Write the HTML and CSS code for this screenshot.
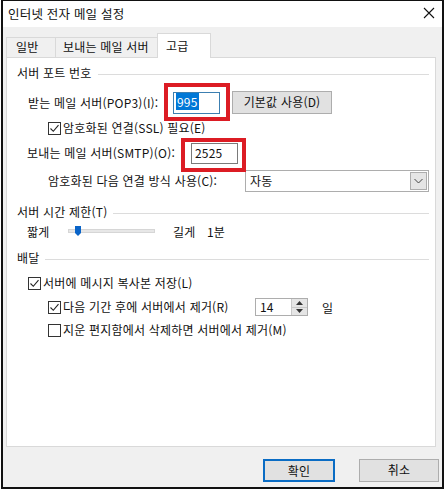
FILE: index.html
```html
<!DOCTYPE html>
<html lang="ko">
<head>
<meta charset="utf-8">
<title>인터넷 전자 메일 설정</title>
<link rel="stylesheet" href="styles.css">
</head>
<body>
<div class="window">
  <div class="titlebar">
    <span class="title">인터넷 전자 메일 설정</span>
    <svg class="close" width="12" height="12" viewBox="0 0 12 12"><path d="M1 1 L11 11 M11 1 L1 11" stroke="#111" stroke-width="1.1" fill="none"/></svg>
  </div>
  <div class="content">
    <div class="tabs">
      <div class="tab tab-general">일반</div>
      <div class="tab tab-outgoing">보내는 메일 서버</div>
      <div class="tab tab-adv">고급</div>
    </div>
    <div class="panel">
      <div class="group-head h1"><span>서버 포트 번호</span><i class="rule"></i></div>

      <div class="row pop3">
        <span class="lbl lbl-pop3">받는 메일 서버(POP3)(I):</span>
        <div class="field f-pop3"><span class="sel">995</span></div>
        <div class="btn btn-default">기본값 사용(D)</div>
      </div>

      <div class="row ssl">
        <span class="chk on"><svg width="13" height="13" viewBox="0 0 13 13"><path d="M2.5 6.5 L5.3 9.3 L10.5 3.2" stroke="#222" stroke-width="1.1" fill="none"/></svg></span>
        <span class="ctext">암호화된 연결(SSL) 필요(E)</span>
      </div>

      <div class="row smtp">
        <span class="lbl lbl-smtp">보내는 메일 서버(SMTP)(O):</span>
        <div class="field f-smtp">2525</div>
      </div>

      <div class="row enc">
        <span class="lbl lbl-enc">암호화된 다음 연결 방식 사용(C):</span>
        <div class="select">
          <span class="sel-text">자동</span>
          <span class="drop"><svg width="9" height="6" viewBox="0 0 9 6"><path d="M0.5 1 L4.5 5 L8.5 1" stroke="#444" stroke-width="1" fill="none"/></svg></span>
        </div>
      </div>

      <div class="group-head h2"><span>서버 시간 제한(T)</span><i class="rule"></i></div>

      <div class="row slider-row">
        <span class="s-short">짧게</span>
        <div class="track"><span class="thumb"><svg width="6" height="10" viewBox="0 0 6 10"><path d="M0 0 H6 V7 L3 10 L0 7 Z" fill="#0a64c8"/></svg></span></div>
        <span class="s-long">길게</span>
        <span class="s-val">1분</span>
      </div>

      <div class="group-head h3"><span>배달</span><i class="rule"></i></div>

      <div class="row c1">
        <span class="chk on"><svg width="13" height="13" viewBox="0 0 13 13"><path d="M2.5 6.5 L5.3 9.3 L10.5 3.2" stroke="#222" stroke-width="1.1" fill="none"/></svg></span>
        <span class="ctext">서버에 메시지 복사본 저장(L)</span>
      </div>

      <div class="row c2">
        <span class="chk on"><svg width="13" height="13" viewBox="0 0 13 13"><path d="M2.5 6.5 L5.3 9.3 L10.5 3.2" stroke="#222" stroke-width="1.1" fill="none"/></svg></span>
        <span class="ctext ctext-remove">다음 기간 후에 서버에서 제거(R)</span>
        <div class="spin">
          <span class="spin-val">14</span>
          <span class="spin-btns">
            <span class="sb"><svg width="7" height="4" viewBox="0 0 7 4"><path d="M0 4 L3.5 0 L7 4 Z" fill="#333"/></svg></span>
            <span class="sb"><svg width="7" height="4" viewBox="0 0 7 4"><path d="M0 0 L3.5 4 L7 0 Z" fill="#333"/></svg></span>
          </span>
        </div>
        <span class="unit">일</span>
      </div>

      <div class="row c3">
        <span class="chk"></span>
        <span class="ctext">지운 편지함에서 삭제하면 서버에서 제거(M)</span>
      </div>
    </div>
    <div class="footer">
      <div class="btn btn-ok">확인</div>
      <div class="btn btn-cancel">취소</div>
    </div>
  </div>
</div>
</body>
</html>
```
FILE: styles.css
```css
* { box-sizing: border-box; }
html, body { margin: 0; padding: 0; background: #fff; }
body {
  font-family: "Noto Sans CJK KR", "Noto Sans", sans-serif;
  font-size: 12px;
  letter-spacing: 0.2px;
  color: #111;
}
.window {
  margin-left: 1px;
  width: 443px;
  height: 489px;
  border: 2px solid #111;
  border-top-width: 1px;
  background: #f0f0f0;
  display: flex;
  flex-direction: column;
}
.titlebar {
  height: 26px;
  background: #fff;
  display: flex;
  align-items: center;
  justify-content: space-between;
  padding: 0 7px 1px 5px;
  flex: none;
}
.title { font-size: 12.5px; line-height: 16px; }
.close { margin-top: -1px; }
.content { padding: 6px 0 0 3px; }
.tabs {
  display: flex;
  align-items: flex-end;
  height: 24px;
  position: relative;
  z-index: 2;
}
.tab {
  height: 20px;
  border: 1px solid #d9d9d9;
  border-bottom: none;
  background: #f0f0f0;
  line-height: 18px;
}
.tab-general { width: 50px; padding-left: 9px; }
.tab-outgoing { width: 102px; padding-left: 7px; border-left: none; }
.tab-adv {
  width: 54px;
  height: 25px;
  background: #fff;
  margin-bottom: -1px;
  margin-left: -1px;
  padding-left: 8px;
  line-height: 24px;
}
.panel {
  width: 430px;
  height: 390px;
  background: #fff;
  border: 1px solid #d9d9d9;
  padding: 0 6px 0 10px;
  display: flex;
  flex-direction: column;
}
.row { display: flex; align-items: center; flex: none; }
.group-head {
  display: flex;
  align-items: center;
  height: 18px;
  line-height: 18px;
  flex: none;
}
.rule { flex: 1; height: 1px; background: #dcdcdc; margin-left: 6px; margin-top: 2px; }
.h1 { margin-top: 6px; }
.h2 { margin-top: 11px; }
.h3 { margin-top: 9px; }

.lbl { flex: none; line-height: 16px; }
.pop3 { margin-top: 9px; height: 23px; padding-left: 11px; }
.lbl-pop3 { width: 145px; }
.field {
  position: relative;
  height: 22px;
  border: 1px solid #7a7a7a;
  background: #fff;
  padding-left: 2px;
  line-height: 18px;
  flex: none;
}
.f-pop3 { width: 47px; border-color: #3c7fb1; }
.sel { background: #0078d7; color: #fff; padding: 0 1px; }
.f-pop3::after {
  content: "";
  position: absolute;
  left: -10px; top: -10px; right: -11px; bottom: -8px;
  border: 4px solid #dc1c24;
}
.btn {
  height: 23px;
  background: #e1e1e1;
  border: 1px solid #adadad;
  text-align: center;
  line-height: 20px;
  flex: none;
}
.btn-default { width: 100px; margin-left: 12px; }

.ssl { margin-top: 6px; height: 16px; padding-left: 31px; }
.chk {
  width: 13px;
  height: 13px;
  border: 1px solid #333;
  background: #fff;
  flex: none;
  position: relative;
}
.chk svg { position: absolute; left: -1px; top: -1px; }
.ctext { margin-left: 2px; line-height: 16px; }

.smtp { margin-top: 6px; height: 22px; padding-left: 10px; }
.lbl-smtp { width: 164px; }
.f-smtp { width: 47px; height: 21px; padding-left: 3px; }
.f-smtp::after {
  content: "";
  position: absolute;
  left: -11px; top: -6px; right: -9px; bottom: -9px;
  border: 4px solid #dc1c24;
}

.enc { margin-top: 6px; height: 22px; padding-left: 31px; }
.lbl-enc { width: 197px; }
.select {
  width: 185px;
  height: 22px;
  border: 1px solid #adadad;
  background: #fff;
  display: flex;
  align-items: center;
  justify-content: space-between;
  padding: 0 1px 0 4px;
}
.sel-text { line-height: 18px; }
.drop {
  width: 17px;
  height: 18px;
  background: #e5e5e5;
  border: 1px solid #adadad;
  display: flex;
  align-items: center;
  justify-content: center;
}

.slider-row { margin-top: 1px; height: 18px; padding-left: 10px; }
.s-short { width: 41px; flex: none; }
.track {
  width: 87px;
  height: 4px;
  background: #e7e7e7;
  border: 1px solid #d6d6d6;
  position: relative;
  flex: none;
}
.thumb { position: absolute; left: 6px; top: -4px; line-height: 0; }
.s-long { margin-left: 18px; width: 34px; flex: none; }
.s-val { flex: none; }

.c1 { margin-top: 8px; height: 16px; padding-left: 11px; }
.c2 { margin-top: 7px; height: 18px; padding-left: 31px; }
.ctext-remove { width: 192px; flex: none; }
.spin {
  width: 53px;
  height: 18px;
  border: 1px solid #adadad;
  display: flex;
  justify-content: space-between;
  align-items: stretch;
  flex: none;
}
.spin-val { padding-left: 4px; line-height: 16px; }
.spin-btns { width: 16px; display: flex; flex-direction: column; }
.sb {
  flex: 1;
  background: #e5e5e5;
  border-left: 1px solid #c8c8c8;
  display: flex;
  align-items: center;
  justify-content: center;
}
.sb + .sb { border-top: 1px solid #c8c8c8; }
.unit { margin-left: 14px; }
.c3 { margin-top: 6px; height: 16px; padding-left: 31px; }

.footer {
  display: flex;
  margin-top: 12px;
  padding-left: 257px;
}
.btn-ok { width: 72px; border: 2px solid #0a6cc4; line-height: 19px; }
.btn-cancel { width: 80px; margin-left: 24px; }
```
